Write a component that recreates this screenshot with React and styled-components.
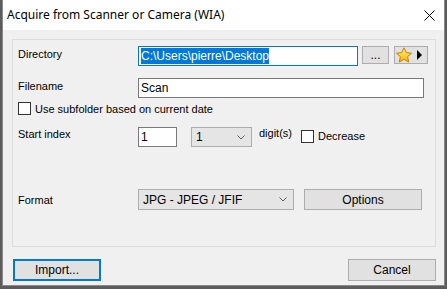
import React from 'react';
import styled, { createGlobalStyle } from 'styled-components';

const GlobalStyle = createGlobalStyle`
  html, body {
    margin: 0;
    padding: 0;
    background: #5c5c5c;
  }
  body {
    font-family: "Liberation Sans", Arial, sans-serif;
    font-size: 11px;
    color: #000;
  }
`;

const Desktop = styled.div`
  width: 447px;
  height: 289px;
  background: #5c5c5c;
  overflow: hidden;
`;

const Window = styled.div`
  margin-left: 2px;
  width: 441px;
  height: 285px;
  background: #f0f0f0;
  border: 1px solid #8a8a8a;
  border-top: none;
  display: flex;
  flex-direction: column;
`;

const TitleBar = styled.div`
  height: 30px;
  background: #fff;
  display: flex;
  align-items: center;
  justify-content: space-between;
  padding: 0 9px 0 4px;
`;

const Title = styled.span`
  font-family: "Noto Sans", "Open Sans", sans-serif;
  font-size: 12px;
  color: #000;
  margin-top: -1px;
`;

const CloseIcon = styled.svg`
  width: 11px;
  height: 11px;
`;

const Body = styled.div`
  flex: 1;
  padding: 9px 8px 0 9px;
  display: flex;
  flex-direction: column;
`;

const Group = styled.div`
  box-sizing: border-box;
  height: 208px;
  border: 1px solid #dcdcdc;
  padding: 6px 0 0 5px;
  display: flex;
  flex-direction: column;
`;

const Row = styled.div`
  display: flex;
  align-items: ${p => p.$align || 'flex-start'};
  height: ${p => p.$h || 20}px;
  margin-top: ${p => p.$mt || 0}px;
`;

const Label = styled.div`
  width: 120px;
  flex: none;
  padding-top: ${p => p.$pt ?? 3}px;
`;

const TextBox = styled.div`
  box-sizing: border-box;
  width: ${p => p.$w}px;
  height: 20px;
  background: #fff;
  border: 1px solid ${p => (p.$focus ? '#0078d7' : '#7a7a7a')};
  font-size: 12px;
  padding: 2px 0 0 2px;
  white-space: nowrap;
  overflow: hidden;
`;

const Selected = styled.span`
  background: #0078d7;
  color: #fff;
  padding: 1px 0 1px;
`;

const Button = styled.div`
  box-sizing: border-box;
  width: ${p => p.$w}px;
  height: ${p => p.$h || 21}px;
  margin-left: ${p => p.$ml || 0}px;
  background: #e1e1e1;
  border: ${p => (p.$default ? '2px solid #0078d7' : '1px solid #adadad')};
  display: flex;
  align-items: center;
  justify-content: center;
  font-size: 12px;
  flex: none;
`;

const Combo = styled.div`
  box-sizing: border-box;
  width: ${p => p.$w}px;
  height: ${p => p.$h || 20}px;
  margin-left: ${p => p.$ml || 0}px;
  background: #e5e5e5;
  border: 1px solid #adadad;
  display: flex;
  align-items: center;
  justify-content: space-between;
  padding: 0 6px 0 4px;
  font-size: 12px;
  flex: none;
`;

const Chevron = styled.svg`
  width: 8px;
  height: 5px;
`;

const Box = styled.div`
  box-sizing: border-box;
  width: 13px;
  height: 13px;
  background: #fff;
  border: 1px solid #333;
  flex: none;
  margin-left: ${p => p.$ml || 0}px;
  margin-top: ${p => p.$mt || 0}px;
`;

const CheckText = styled.span`
  margin-left: 4px;
  margin-top: ${p => p.$mt || 0}px;
`;

const Inline = styled.span`
  margin-left: ${p => p.$ml || 0}px;
  margin-top: ${p => p.$mt || 0}px;
`;

const Footer = styled.div`
  display: flex;
  justify-content: space-between;
  margin-top: 12px;
  padding-left: 1px;
  padding-right: 0;
`;

const StarIcon = () => (
  <svg width="32" height="16" viewBox="0 0 32 16">
    <defs>
      <linearGradient id="sg" x1="0" y1="0" x2="0" y2="1">
        <stop offset="0" stopColor="#fff27a" />
        <stop offset="1" stopColor="#f5b800" />
      </linearGradient>
    </defs>
    <path
      d="M9 0.8 L11.3 5.6 L16.5 6.2 L12.6 9.7 L13.7 15 L9 12.3 L4.3 15 L5.4 9.7 L1.5 6.2 L6.7 5.6 Z"
      fill="url(#sg)"
      stroke="#d17a00"
      strokeWidth="1"
      strokeLinejoin="round"
    />
    <path d="M22 3 L27 8 L22 13 Z" fill="#000" />
  </svg>
);

const ComboArrow = () => (
  <Chevron viewBox="0 0 8 5">
    <path d="M0.5 0.5 L4 4 L7.5 0.5" fill="none" stroke="#606060" strokeWidth="1" />
  </Chevron>
);

export default function App() {
  return (
    <Desktop>
      <GlobalStyle />
      <Window>
        <TitleBar>
          <Title>Acquire from Scanner or Camera (WIA)</Title>
          <CloseIcon viewBox="0 0 11 11">
            <path d="M0.5 0.5 L10.5 10.5 M10.5 0.5 L0.5 10.5" stroke="#000" strokeWidth="1" />
          </CloseIcon>
        </TitleBar>
        <Body>
          <Group>
            <Row>
              <Label $pt={2}>Directory</Label>
              <TextBox $w={220} $focus>
                <Selected>C:\Users\pierre\Desktop</Selected>
              </TextBox>
              <Button $w={27} $h={18} $ml={4}>...</Button>
              <Button $w={34} $h={18} $ml={5}>
                <StarIcon />
              </Button>
            </Row>
            <Row $mt={12}>
              <Label $pt={2}>Filename</Label>
              <TextBox $w={286}>Scan</TextBox>
            </Row>
            <Row $mt={4} $h={13} $align="center">
              <Box />
              <CheckText>Use subfolder based on current date</CheckText>
            </Row>
            <Row $mt={12}>
              <Label $pt={1}>Start index</Label>
              <TextBox $w={39}>1</TextBox>
              <Combo $w={61} $ml={14}>
                <span>1</span>
                <ComboArrow />
              </Combo>
              <Inline $ml={7} $mt={0}>digit(s)</Inline>
              <Box $ml={9} $mt={3} />
              <CheckText $mt={3}>Decrease</CheckText>
            </Row>
            <Row $mt={42} $h={21}>
              <Label $pt={5}>Format</Label>
              <Combo $w={156} $h={21}>
                <span>JPG - JPEG / JFIF</span>
                <ComboArrow />
              </Combo>
              <Button $w={118} $h={21} $ml={10}>Options</Button>
            </Row>
          </Group>
          <Footer>
            <Button $w={88} $h={22} $default>Import...</Button>
            <Button $w={88} $h={22}>Cancel</Button>
          </Footer>
        </Body>
      </Window>
    </Desktop>
  );
}
